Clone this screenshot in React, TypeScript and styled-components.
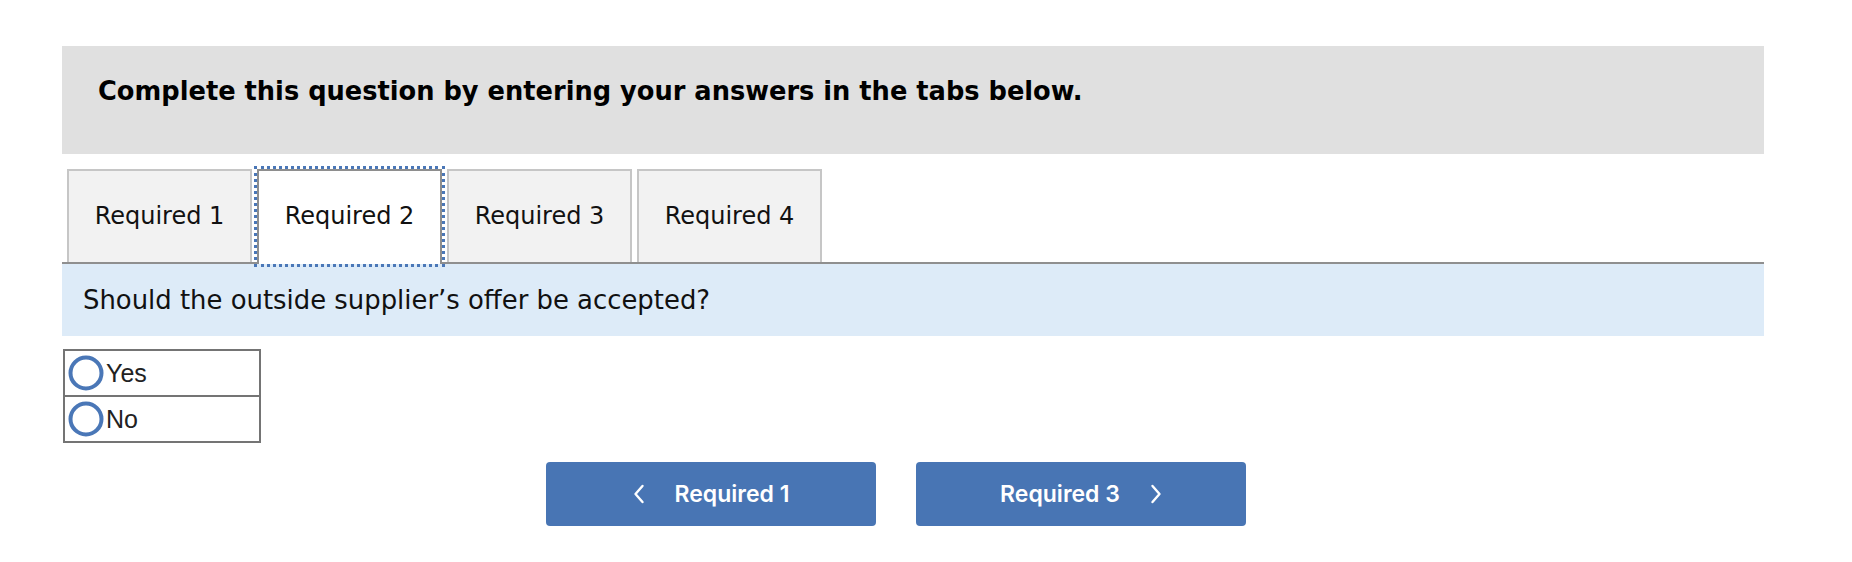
import { useState } from "react";
import styled, { createGlobalStyle } from "styled-components";

const GlobalStyle = createGlobalStyle`
  body {
    margin: 0;
    background: #ffffff;
    font-family: "DejaVu Sans", Verdana, sans-serif;
    color: #111111;
  }
`;

const Page = styled.div`
  width: 1702px;
  padding: 46px 0 0 62px;
`;

const Banner = styled.div`
  background: #e0e0e0;
  height: 108px;
  padding-left: 36px;
  display: flex;
  align-items: center;
  box-sizing: border-box;
`;

const BannerText = styled.h1`
  margin: 0 0 18px 0;
  font-size: 25.7px;
  font-weight: 700;
  color: #000000;
`;

const TabBar = styled.div`
  display: flex;
  gap: 5px;
  margin-top: 15px;
  padding-left: 5px;
  border-bottom: 2px solid #8f8f8f;
`;

const Tab = styled.button<{ $active?: boolean }>`
  width: 185px;
  box-sizing: border-box;
  font-family: "DejaVu Sans", Verdana, sans-serif;
  font-size: 24px;
  color: #111111;
  background: ${(p) => (p.$active ? "#ffffff" : "#f2f2f2")};
  border: 2px solid ${(p) => (p.$active ? "#8e8e8e" : "#c6c6c6")};
  border-bottom: none;
  outline: ${(p) => (p.$active ? "3px dotted #4a77b7" : "none")};
  padding: 0 0 ${(p) => (p.$active ? "4px" : "2px")} 0;
  margin: 0 0 ${(p) => (p.$active ? "-2px" : "0")} 0;
  height: ${(p) => (p.$active ? "95px" : "93px")};
  position: relative;
  z-index: ${(p) => (p.$active ? 1 : 0)};
  cursor: pointer;
`;

const Question = styled.div`
  background: #ddebf8;
  height: 72px;
  display: flex;
  align-items: center;
  padding-left: 21px;
  font-size: 25.9px;
  color: #111111;
`;

const Options = styled.div`
  margin-top: 13px;
  margin-left: 1px;
  width: 198px;
  box-sizing: border-box;
  border: 2px solid #747474;
`;

const Option = styled.label<{ $last?: boolean }>`
  display: flex;
  align-items: center;
  gap: 2px;
  height: 44px;
  padding-left: 3px;
  border-bottom: ${(p) => (p.$last ? "none" : "2px solid #747474")};
  font-family: "Liberation Sans", Arial, sans-serif;
  font-size: 25px;
  color: #222222;
  cursor: pointer;
`;

const RadioDot = styled.svg`
  width: 36px;
  height: 36px;
  flex: none;
`;

const ButtonRow = styled.div`
  display: flex;
  justify-content: center;
  gap: 40px;
  margin-top: 19px;
  padding-right: 34px;
`;

const NavButton = styled.button`
  width: 330px;
  height: 64px;
  border: none;
  border-radius: 4px;
  background: #4875b4;
  color: #ffffff;
  font-family: Inter, "Noto Sans", sans-serif;
  font-weight: 600;
  font-size: 23px;
  display: flex;
  align-items: center;
  justify-content: center;
  gap: 30px;
  cursor: pointer;
`;

const Chevron = ({ dir }: { dir: "left" | "right" }) => (
  <svg width="12" height="20" viewBox="0 0 12 20">
    <path
      d={dir === "left" ? "M9.5 2 L2.5 10 L9.5 18" : "M2.5 2 L9.5 10 L2.5 18"}
      fill="none"
      stroke="#ffffff"
      strokeWidth="2.4"
      strokeLinecap="round"
      strokeLinejoin="round"
    />
  </svg>
);

const tabs = ["Required 1", "Required 2", "Required 3", "Required 4"];

export default function App() {
  const [active, setActive] = useState(1);
  const [choice, setChoice] = useState<string | null>(null);

  return (
    <>
      <GlobalStyle />
      <Page>
        <Banner>
          <BannerText>
            Complete this question by entering your answers in the tabs below.
          </BannerText>
        </Banner>
        <TabBar>
          {tabs.map((t, i) => (
            <Tab key={t} $active={i === active} onClick={() => setActive(i)}>
              {t}
            </Tab>
          ))}
        </TabBar>
        <Question>Should the outside supplier’s offer be accepted?</Question>
        <Options>
          {["Yes", "No"].map((o, i) => (
            <Option key={o} $last={i === 1} onClick={() => setChoice(o)}>
              <RadioDot viewBox="0 0 36 36">
                <circle cx="18" cy="18" r="15.5" fill="none" stroke="#4a77b7" strokeWidth="4" />
                {choice === o && <circle cx="18" cy="18" r="8" fill="#4a77b7" />}
              </RadioDot>
              {o}
            </Option>
          ))}
        </Options>
        <ButtonRow>
          <NavButton>
            <Chevron dir="left" />
            Required 1
          </NavButton>
          <NavButton>
            Required 3
            <Chevron dir="right" />
          </NavButton>
        </ButtonRow>
      </Page>
    </>
  );
}
